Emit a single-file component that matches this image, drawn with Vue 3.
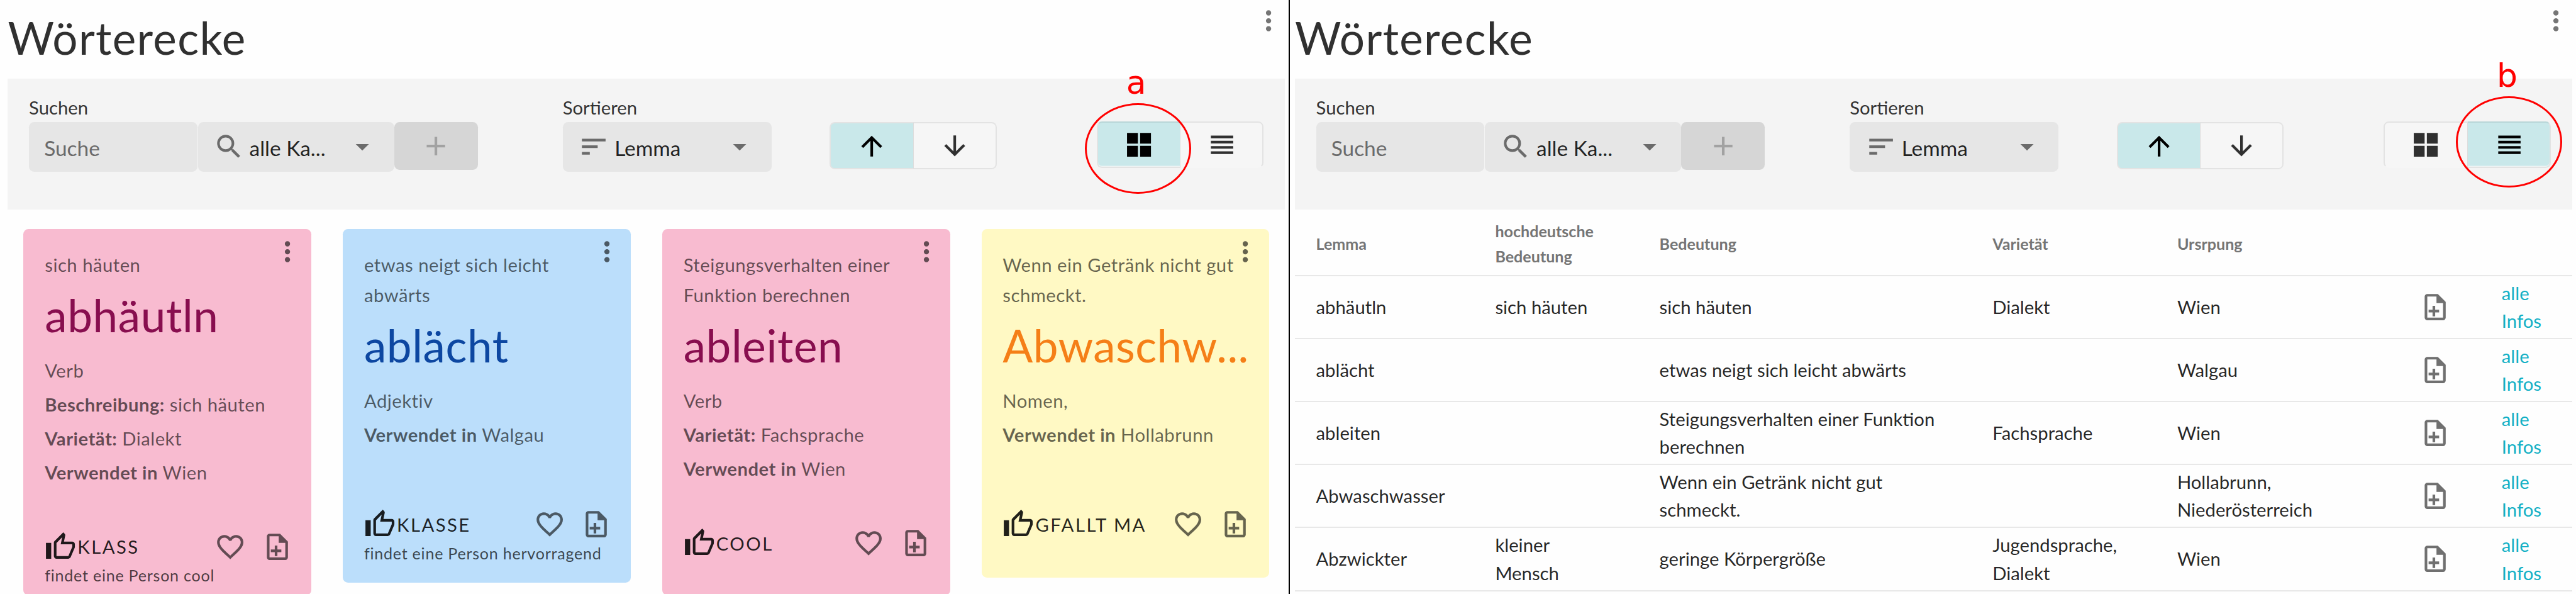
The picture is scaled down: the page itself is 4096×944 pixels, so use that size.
<script setup>
const filters = { search: 'Suchen', sort: 'Sortieren' }
const icons = {
  dots: 'M12,16A2,2 0 0,1 14,18A2,2 0 0,1 12,20A2,2 0 0,1 10,18A2,2 0 0,1 12,16M12,10A2,2 0 0,1 14,12A2,2 0 0,1 12,14A2,2 0 0,1 10,12A2,2 0 0,1 12,10M12,4A2,2 0 0,1 14,6A2,2 0 0,1 12,8A2,2 0 0,1 10,6A2,2 0 0,1 12,4Z',
  magnify: 'M9.5,3A6.5,6.5 0 0,1 16,9.5C16,11.11 15.41,12.59 14.44,13.73L14.71,14H15.5L20.5,19L19,20.5L14,15.5V14.71L13.73,14.44C12.59,15.41 11.11,16 9.5,16A6.5,6.5 0 0,1 3,9.5A6.5,6.5 0 0,1 9.5,3M9.5,5C7,5 5,7 5,9.5C5,12 7,14 9.5,14C12,14 14,12 14,9.5C14,7 12,5 9.5,5Z',
  menu: 'M7,10L12,15L17,10H7Z',
  plus: 'M19,13H13V19H11V13H5V11H11V5H13V11H19V13Z',
  sort: 'M3,18H9V16H3M3,6V8H21V6M3,13H15V11H3V13Z',
  up: 'M13,20H11V8L5.5,13.5L4.08,12.08L12,4.16L19.92,12.08L18.5,13.5L13,8V20Z',
  down: 'M11,4H13V16L18.5,10.5L19.92,11.92L12,19.84L4.08,11.92L5.5,10.5L11,16V4Z',
  grid: 'M2.9,11.15H11.15V3H2.9M2.9,21H11.15V12.85H2.9M12.85,21H21.1V12.85H12.85M12.85,3V11.15H21.1V3',
  list: 'M4,5V7H21V5M4,11H21V9H4M4,19H21V17H4M4,15H21V13H4V15Z',
  thumb: 'M5,9V21H1V9H5M9,21A2,2 0 0,1 7,19V9C7,8.45 7.22,7.95 7.59,7.59L14.17,1L15.23,2.06C15.5,2.33 15.67,2.7 15.67,3.11L15.64,3.43L14.69,8H21C22.11,8 23,8.9 23,10V12C23,12.26 22.95,12.5 22.86,12.73L19.84,19.78C19.54,20.5 18.83,21 18,21H9M9,19H18.03L21,12V10H12.21L13.34,4.68L9,9.03V19Z',
  heart: 'M12.1,18.55L12,18.65L11.89,18.55C7.14,14.24 4,11.39 4,8.5C4,6.5 5.5,5 7.5,5C9.04,5 10.54,6 11.07,7.36H12.93C13.46,6 14.96,5 16.5,5C18.5,5 20,6.5 20,8.5C20,11.39 16.86,14.24 12.1,18.55M16.5,3C14.76,3 13.09,3.81 12,5.08C10.91,3.81 9.24,3 7.5,3C4.42,3 2,5.41 2,8.5C2,12.27 5.4,15.36 10.55,20.03L12,21.35L13.45,20.03C18.6,15.36 22,12.27 22,8.5C22,5.41 19.58,3 16.5,3Z',
  file: 'M14,2H6A2,2 0 0,0 4,4V20A2,2 0 0,0 6,22H18A2,2 0 0,0 20,20V8L14,2M18,20H6V4H13V9H18V20M15,16H12V19H10V16H7V14H10V11H12V14H15V16Z',
}
const panels = [
  { view: 'grid', mark: 'a' },
  { view: 'list', mark: 'b' },
]
const cards = [
  { tone: 'pink', meaning: 'sich häuten', lemma: 'abhäutln', kind: 'Verb', facts: [['Beschreibung:', 'sich häuten'], ['Varietät:', 'Dialekt'], ['Verwendet in', 'Wien']], like: 'KLASS', note: 'findet eine Person cool' },
  { tone: 'blue', meaning: 'etwas neigt sich leicht\nabwärts', lemma: 'ablächt', kind: 'Adjektiv', facts: [['Verwendet in', 'Walgau']], like: 'KLASSE', note: 'findet eine Person hervorragend' },
  { tone: 'pink', meaning: 'Steigungsverhalten einer\nFunktion berechnen', lemma: 'ableiten', kind: 'Verb', facts: [['Varietät:', 'Fachsprache'], ['Verwendet in', 'Wien']], like: 'COOL', note: '' },
  { tone: 'yellow', meaning: 'Wenn ein Getränk nicht gut\nschmeckt.', lemma: 'Abwaschw...', kind: 'Nomen,', facts: [['Verwendet in', 'Hollabrunn']], like: 'GFALLT MA', note: '' },
]
const heads = ['Lemma', 'hochdeutsche\nBedeutung', 'Bedeutung', 'Varietät', 'Ursrpung', '', '']
const rows = [
  ['abhäutln', 'sich häuten', 'sich häuten', 'Dialekt', 'Wien'],
  ['ablächt', '', 'etwas neigt sich leicht abwärts', '', 'Walgau'],
  ['ableiten', '', 'Steigungsverhalten einer Funktion\nberechnen', 'Fachsprache', 'Wien'],
  ['Abwaschwasser', '', 'Wenn ein Getränk nicht gut\nschmeckt.', '', 'Hollabrunn,\nNiederösterreich'],
  ['Abzwickter', 'kleiner\nMensch', 'geringe Körpergröße', 'Jugendsprache,\nDialekt', 'Wien'],
]
</script>

<template>
  <main class="page">
    <section v-for="p in panels" :key="p.view" class="panel" :class="'panel-' + p.view">
      <header class="head">
        <h1>Wörterecke</h1>
        <svg class="icon more" viewBox="0 0 24 24"><path :d="icons.dots" /></svg>
      </header>

      <div class="toolbar">
        <div class="field-block search">
          <label>{{ filters.search }}</label>
          <div class="fields">
            <div class="field query">Suche</div>
            <div class="field scope">
              <svg class="icon" viewBox="0 0 24 24"><path :d="icons.magnify" /></svg>
              <span>alle Ka...</span>
              <svg class="icon caret" viewBox="0 0 24 24"><path :d="icons.menu" /></svg>
            </div>
            <button class="add"><svg class="icon" viewBox="0 0 24 24"><path :d="icons.plus" /></svg></button>
          </div>
        </div>
        <div class="field-block sort">
          <label>{{ filters.sort }}</label>
          <div class="field order">
            <svg class="icon" viewBox="0 0 24 24"><path :d="icons.sort" /></svg>
            <span>Lemma</span>
            <svg class="icon caret" viewBox="0 0 24 24"><path :d="icons.menu" /></svg>
          </div>
        </div>
        <div class="toggle direction">
          <button class="on"><svg class="icon" viewBox="0 0 24 24"><path :d="icons.up" /></svg></button>
          <button><svg class="icon" viewBox="0 0 24 24"><path :d="icons.down" /></svg></button>
        </div>
        <div class="toggle views">
          <button :class="{ on: p.view === 'grid' }"><svg class="icon" viewBox="0 0 24 24"><path :d="icons.grid" /></svg></button>
          <button :class="{ on: p.view === 'list' }"><svg class="icon" viewBox="0 0 24 24"><path :d="icons.list" /></svg></button>
          <span class="ring"></span>
          <span class="mark">{{ p.mark }}</span>
        </div>
      </div>

      <div v-if="p.view === 'grid'" class="cards">
        <article v-for="(c, i) in cards" :key="c.lemma" class="card" :class="[c.tone, 'card-' + (i + 1)]">
          <svg class="icon card-more" viewBox="0 0 24 24"><path :d="icons.dots" /></svg>
          <p class="meaning">{{ c.meaning }}</p>
          <h2>{{ c.lemma }}</h2>
          <div class="facts">
            <p>{{ c.kind }}</p>
            <p v-for="f in c.facts" :key="f[0]"><b>{{ f[0] }}</b> {{ f[1] }}</p>
          </div>
          <div class="actions">
            <svg class="icon thumb" viewBox="0 0 24 24"><path :d="icons.thumb" /></svg>
            <span class="like">{{ c.like }}</span>
            <svg class="icon heart" viewBox="0 0 24 24"><path :d="icons.heart" /></svg>
            <svg class="icon add-list" viewBox="0 0 24 24"><path :d="icons.file" /></svg>
          </div>
          <p v-if="c.note" class="note">{{ c.note }}</p>
        </article>
      </div>

      <div v-else class="table">
        <div class="row row-head">
          <span v-for="(h, i) in heads" :key="i">{{ h }}</span>
        </div>
        <div v-for="r in rows" :key="r[0]" class="row">
          <span v-for="(cell, i) in r" :key="i">{{ cell }}</span>
          <span><svg class="icon" viewBox="0 0 24 24"><path :d="icons.file" /></svg></span>
          <a>alle<br />Infos</a>
        </div>
      </div>
    </section>
  </main>
</template>

<style>
html, body { margin: 0; overflow: hidden; background: #fff; }
</style>

<style scoped>
.page {
  zoom: 0.98013;
  width: 4180px;
  height: 964px;
  overflow: hidden;
  display: flex;
  background: #fefefe;
  font-family: Lato, "Open Sans", sans-serif;
  font-size: 29.87px;
  color: rgba(0, 0, 0, 0.87);
}
.page *, .page { box-sizing: border-box; }
h1, h2, p { margin: 0; font-weight: 400; }
.icon { width: 51.2px; height: 51.2px; flex: none; fill: currentColor; display: block; }
.panel { flex: none; width: 2088.3px; padding: 0 3.9px 0 12.7px; height: 964px; }
.panel-list { border-left: 2.1px solid #000; margin-left: 2px; padding-left: 8.4px; padding-right: 5.9px; }
.head { height: 127.3px; display: flex; justify-content: space-between; }
h1 { font-size: 72.5px; line-height: 88px; padding-top: 17.3px; color: #303030; letter-spacing: 0.0187em; }
.more { margin: 8px 1px 0 0; color: #757575; }
.toolbar { height: 212.7px; background: #f4f4f4; display: flex; padding-left: 34.3px; }
.field-block label { display: block; height: 70.7px; padding-top: 24.5px; line-height: 44px; color: #333; }
.search { width: 865.8px; }
.fields { display: flex; align-items: flex-start; }
.field { height: 81px; border-radius: 8.5px; background: #e6e6e6; display: flex; align-items: center; font-size: 34.13px; line-height: 50px; padding-top: 3px; }
.query { width: 273px; padding-left: 24.6px; color: #6b6b6b; margin-right: 1px; }
.scope { width: 318.5px; padding-left: 24.5px; }
.scope .icon, .order .icon { color: #6b6b6b; margin-top: -3.6px; }
.field span { flex: 1; margin-left: 8px; }
.field .caret { margin-right: 25.6px; }
.add { width: 135.5px; height: 78px; border: 0; border-radius: 8.5px; background: #d6d6d6; color: #a2a2a2; display: flex; align-items: center; justify-content: center; padding: 0; }
.sort { width: 433.3px; }
.order { width: 338.7px; padding-left: 25px; }
.toggle { display: flex; width: 271px; height: 77px; margin-top: 70.6px; position: relative; }
.toggle button { flex: 1; display: flex; align-items: center; justify-content: center; padding: 0; border: 2.1px solid #e3e3e3; background: #f6f6f6; color: #303030; }
.toggle button:first-child { border-radius: 8.5px 0 0 8.5px; border-right: 1.1px solid #dcdcdc; }
.toggle button:nth-child(2) { border-radius: 0 8.5px 8.5px 0; border-left-width: 0; }
.toggle button.on { background: #c9e8ea; color: #000; }
.views { margin-left: 162px; margin-top: 69.5px; height: 76px; }
.views button:not(.on) { border-bottom-color: #f6f6f6; }
.toggle.views button.on { border-top-color: #b8d6d8; box-shadow: inset 0 -1.5px 0 #eef4f4; }
.ring { position: absolute; width: 172.3px; height: 147.3px; border: 3.1px solid #f00; border-radius: 50%; left: -19.1px; top: -29.6px; }
.mark { position: absolute; font: 53px/60px "DejaVu Sans", sans-serif; color: #f00; left: 47.9px; top: -92.8px; }
.panel-list .ring { left: 117.6px; top: -40.3px; }
.panel-list .mark { left: 183.4px; top: -103.8px; }

.cards { display: flex; align-items: flex-start; gap: 51px; padding: 31px 0 0 25.5px; }
.card { position: relative; width: 467px; flex: none; padding: 33.7px 34.5px 0; border-radius: 8.5px; color: rgba(0, 0, 0, 0.6); letter-spacing: 0.0165em; }
.card-1, .card-3 { height: 594px; }
.card-2 { height: 574px; }
.card-4 { height: 565.4px; }
.pink { background: #f8bbd0; }
.blue { background: #bbdefb; }
.yellow { background: #fff9c4; }
.card-more { position: absolute; right: 13px; top: 12px; }
.meaning { line-height: 49.3px; white-space: pre; }
h2 { font-size: 72.5px; line-height: 88px; margin: 13px 0 18.2px; letter-spacing: 0.0085em; white-space: nowrap; }
.pink h2 { color: #880e4f; }
.blue h2 { color: #0d47a1; }
.yellow h2 { color: #f57f17; letter-spacing: 0.006em; }
.facts { min-height: 135.2px; line-height: 55.2px; white-space: nowrap; }
.actions { display: flex; align-items: center; margin-top: 66.5px; height: 52px; }
.thumb { color: rgba(0, 0, 0, 0.87); }
.like { color: rgba(0, 0, 0, 0.87); letter-spacing: 0.084em; margin-left: 2px; flex: 1; white-space: nowrap; }
.heart { margin-right: 25.2px; }
.add-list { margin-right: -4.6px; }
.note { font-size: 25.6px; line-height: 42.4px; letter-spacing: 0.03em; white-space: nowrap; color: rgba(0, 0, 0, 0.7); }

.row { display: grid; grid-template-columns: 290.6px 266.5px 540.4px 299.6px 392.9px 133.5px 1fr; align-items: center; height: 102.13px; border-bottom: 2.1px solid #e8e8e8; line-height: 45.5px; }
.row > * { padding-left: 34.3px; white-space: pre; }
.row-head { height: 108px; padding-top: 4px; font-size: 25.6px; font-weight: 700; line-height: 41px; color: #757575; }
.row .icon { color: #707070; }
.row a { color: #12b0c5; }
</style>
